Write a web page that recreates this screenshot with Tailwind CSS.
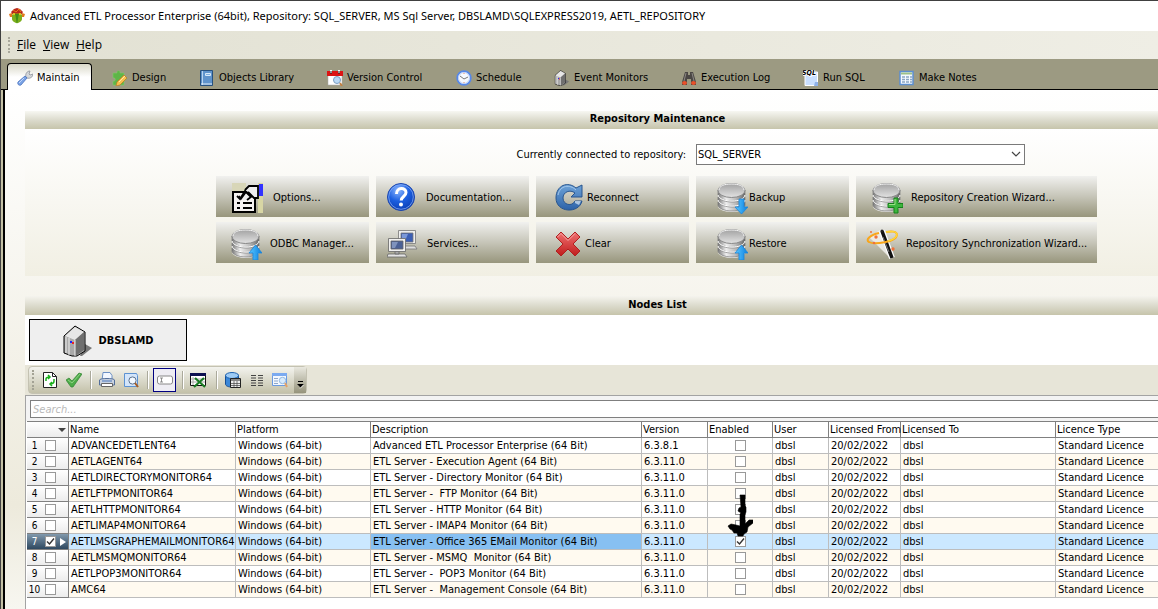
<!DOCTYPE html>
<html lang="en">
<head>
<meta charset="utf-8">
<title>Advanced ETL Processor Enterprise</title>
<script src="https://cdn.jsdelivr.net/npm/@tailwindcss/browser@4"></script>
</head>
<body class="flex min-h-screen flex-col overflow-hidden border-t border-l border-[#404040] bg-white font-['DejaVu_Sans_Condensed','DejaVu_Sans',sans-serif] text-[11px] leading-4 text-black">

<svg class="absolute size-0" xmlns="http://www.w3.org/2000/svg" aria-hidden="true">
  <defs>
    <linearGradient id="metal" x1="0" x2="1"><stop offset="0" stop-color="#777"/><stop offset=".3" stop-color="#eee"/><stop offset=".65" stop-color="#bbb"/><stop offset="1" stop-color="#666"/></linearGradient>
    <linearGradient id="lid" x1="0" x2="0" y1="0" y2="1"><stop offset="0" stop-color="#a2a2a2"/><stop offset="1" stop-color="#e2e2e2"/></linearGradient>
    <linearGradient id="azure" x1="0" x2="1"><stop offset="0" stop-color="#5cc8ff"/><stop offset="1" stop-color="#0a7fe0"/></linearGradient>
    <linearGradient id="steel" x1="0" x2="0" y1="0" y2="1"><stop offset="0" stop-color="#6ea3d8"/><stop offset="1" stop-color="#2c62a8"/></linearGradient>
    <linearGradient id="ruby" x1="0" x2="0" y1="0" y2="1"><stop offset="0" stop-color="#f07070"/><stop offset="1" stop-color="#c01c1c"/></linearGradient>
    <radialGradient id="orb" cx=".4" cy=".25" r=".8"><stop offset="0" stop-color="#8db8ff"/><stop offset=".5" stop-color="#1c5fe0"/><stop offset="1" stop-color="#0a3bb0"/></radialGradient>
  </defs>
  <symbol id="db" viewBox="0 0 32 32">
    <path d="M2 9v15c0 3 6 6 14 6s13-3 13-6V9z" fill="#f4f4f4"/>
    <path d="M2 20v3c0 3 6 6 14 6s13-3 13-6v-3c-2 3-7 5-13 5S4 23 2 20z" fill="url(#metal)" stroke="#777" stroke-width=".7"/>
    <path d="M2 15v3c0 3 6 6 14 6s13-3 13-6v-3c-2 3-7 5-13 5S4 18 2 15z" fill="url(#metal)" stroke="#777" stroke-width=".7"/>
    <path d="M2 8v5c0 3 6 6 14 6s13-3 13-6V8z" fill="url(#metal)" stroke="#777" stroke-width=".7"/>
    <path d="M2 13c1 4 7 6 14 6s12-2 13-6M2 18c1 4 7 6 14 6s12-2 13-6" fill="none" stroke="#fff"/>
    <ellipse cx="15.500" cy="8.500" rx="13.500" ry="7" fill="url(#lid)" stroke="#888"/>
    <path d="M3 8c0-4 5-6 12.500-6S28 4 28 8" fill="none" stroke="#f8f8f8"/>
  </symbol>
  <symbol id="up" viewBox="0 0 32 32"><path d="M25.500 17l6.500 8h-4v7h-5v-7h-4z" fill="url(#azure)" stroke="#1b86dc" stroke-width=".8"/></symbol>
  <symbol id="down" viewBox="0 0 32 32"><path d="M23 17h5v8h4l-6.500 7-6.500-7h4z" fill="url(#azure)" stroke="#1b86dc" stroke-width=".8"/></symbol>
  <symbol id="server" viewBox="0 0 30 32">
    <path d="M17 31l5-12 7 4-10 8z" fill="#777"/>
    <path d="M1 11L12 1l10 6v19l-8 5H9l-8-3z" fill="#a9a9a9" stroke="#000"/>
    <path d="M2 11L12 2l9 5-9 8z" fill="#e6e6e6"/>
    <path d="M12 15l9-8v18l-7 5h-2z" fill="#6f6f6f"/>
    <path d="M3 12v16M6 13v17M12 15v16" stroke="#eee" fill="none"/>
    <path d="M7 16h2v2H7z" fill="#22f"/><path d="M9 17h2v2H9z" fill="#e22"/>
  </symbol>
</svg>

<header class="flex h-[30px] items-center gap-[5px] bg-white pl-2">
  <svg class="size-4 shrink-0" viewBox="0 0 16 16"><path d="M2 4l3-3 3-1 3 1 3 3-2 3H4z" fill="#b8271a"/><path d="M4 2l3 2 3-3 2 3" fill="none" stroke="#e8781c"/><path d="M0 6l3-1v4H1zM16 6l-3-1v4h2z" fill="#e37a1d"/><path d="M3 7c2-2 8-2 10 0v4c0 2-3 4-5 4s-5-2-5-4z" fill="#7cae1c"/><path d="M6 6c1 3 1 6 2 10 1-4 1-7 2-10z" fill="#3f8d17"/><path d="M4 5h2v2H4zM10 5h2v2h-2z" fill="#d5c71e"/></svg>
  <h1 class="font-['Noto_Sans',sans-serif] text-[11px] leading-4 whitespace-nowrap">Advanced ETL Processor Enterprise (64bit), Repository: SQL_SERVER, MS Sql Server, DBSLAMD\SQLEXPRESS2019, AETL_REPOSITORY</h1>
</header>

<nav class="flex h-7 items-center bg-linear-to-r from-[#e2e1d3] to-[#efeee5] pl-[7px] font-['Open_Sans',sans-serif] text-[12px]" aria-label="Menu">
  <span class="mr-[7px] h-4 border-l-2 border-dotted border-[#a9a89c]"></span>
  <button class="w-[26px] text-left"><u>F</u>ile</button>
  <button class="w-[33px] text-left"><u>V</u>iew</button>
  <button class="text-left"><u>H</u>elp</button>
</nav>

<div class="flex h-[31px] shrink-0 items-end border-b border-black bg-[#9c9a82] pl-1.5 whitespace-nowrap" role="tablist">
  <button role="tab" aria-selected="true" class="-mb-px mr-5 flex h-[27px] w-[85px] items-center gap-1 rounded-t border-x border-t border-black bg-linear-to-b from-[#d9d8c8] via-white to-white pt-0.5 pl-[9px]">
    <svg class="size-4" viewBox="0 0 16 16"><path d="M9 7C8 4 10 1 13 1l-1 3 1 1 3-1c0 3-3 5-6 4z" fill="#d5d8dc" stroke="#8b9098" stroke-width=".8"/><path d="M8 6l2 2-6 7c-2 1-4-1-3-3z" fill="#7ba4e6" stroke="#4a72be" stroke-width=".8"/><path d="M7 8l-5 5" stroke="#c4d8fa"/></svg>Maintain</button>
  <button role="tab" class="flex h-6 w-[87px] items-center gap-1 pt-0.5"><svg class="size-4" viewBox="0 0 16 16"><path d="M1 3h4c-1-3 4-3 3 0h4v4c3-1 3 4 0 3v5H8c1-3-4-3-3 0H1v-4c3 1 3-4 0-3z" fill="#5fb548" stroke="#84c96c" stroke-width=".6"/><path d="M5 12l7-7 3 3-7 7-4 1z" fill="#f7c04e" stroke="#b87820" stroke-width=".7"/><path d="M7 12l6-6" stroke="#ffe9a6"/></svg>Design</button>
  <button role="tab" class="flex h-6 w-[128px] items-center gap-1 pt-0.5"><svg class="size-4" viewBox="0 0 16 16"><path d="M1.500.500h12v15h-12z" fill="#5f93cc" stroke="#27517f"/><path d="M3.500 1v14" stroke="#b9d4ef"/><path d="M6.500 3.500h5v2h-5z" fill="#7fb0e0" stroke="#d7e8f8"/><path d="M2 14h11" stroke="#e4eef8"/></svg>Objects Library</button>
  <button role="tab" class="flex h-6 w-[129px] items-center gap-1 pt-0.5"><svg class="size-4" viewBox="0 0 16 16"><path d="M1 4h14v11H1z" fill="#fff" stroke="#aaa" stroke-width=".5"/><path d="M0 1h16v5H0z" fill="#dc1414"/><path d="M4 0v3M12 0v3" stroke="#fff" stroke-width="2"/><path d="M4 1v3M12 1v3" stroke="#222"/><circle cx="10" cy="10" r="3.500" fill="#b9d9f6" stroke="#7c9dc0"/><path d="M13 13l2 3" stroke="#c28144" stroke-width="2"/></svg>Version Control</button>
  <button role="tab" class="flex h-6 w-[98px] items-center gap-1 pt-0.5"><svg class="size-4" viewBox="0 0 16 16"><circle cx="8" cy="8" r="6.800" fill="#f7faff" stroke="#5688e8" stroke-width="1.800"/><circle cx="8" cy="8" r="5.500" fill="none" stroke="#bcd0f5"/><path d="M4 6l4 3 4-2" fill="none" stroke="#777"/><path d="M8 3v1M8 12v1" stroke="#e98a62"/></svg>Schedule</button>
  <button role="tab" class="flex h-6 w-[127px] items-center gap-1 pt-0.5"><svg class="size-4" viewBox="0 0 30 32"><use href="#server"/></svg>Event Monitors</button>
  <button role="tab" class="flex h-6 w-[122px] items-center gap-1 pt-0.5"><svg class="size-4" viewBox="0 0 16 16"><path d="M4 2h3v3h2V2h3l3 10v3h-5V9H6v6H1v-3z" fill="#4b4744"/><path d="M5 3l-2 8M11 3l2 8" stroke="#8c8885" fill="none"/><ellipse cx="3.500" cy="13" rx="2.500" ry="2" fill="#e8502a"/><ellipse cx="12.500" cy="13" rx="2.500" ry="2" fill="#e8502a"/></svg>Execution Log</button>
  <button role="tab" class="flex h-6 w-[96px] items-center gap-1 pt-0.5"><svg class="size-4" viewBox="0 0 16 16"><path d="M2 2h12.500v13.500H2z" fill="#c9dfff" stroke="#fff"/><path d="M12 12h3v4h-4z" fill="#8fb2ea"/><text x="-1" y="5" font-size="7" font-weight="bold" font-style="italic" stroke="#fff" stroke-width="1.500" paint-order="stroke">SQL</text></svg>Run SQL</button>
  <button role="tab" class="flex h-6 items-center gap-1 pt-0.5"><svg class="size-4" viewBox="0 0 16 16"><path d="M1 1.500h13v13H1z" fill="#f5faff" stroke="#5c8fd0" stroke-width="1.500"/><path d="M2 2.500h11v2H2z" fill="#9cc088"/><path d="M3 7h3M7 7h3M11 7h2M3 9.500h3M7 9.500h3M11 9.500h2M3 12h3M7 12h3M11 12h2" stroke="#8aa6c4" stroke-width="1.300"/></svg>Make Notes</button>
</div>

<div class="flex flex-1 bg-[#c4c1a6]">
  <main class="ml-0.5 flex min-w-0 flex-1 flex-col border-l-2 border-black bg-linear-to-b from-white via-[#edeadc] via-80% to-[#f7f6f0] pt-[21px] pl-5">
    <h2 class="h-[18px] bg-linear-to-b from-[#f7f7f2] via-[#dcdbcd] to-[#c6c4ab] pl-[132px] text-center font-bold leading-[15px]">Repository Maintenance</h2>
    <section class="h-[147px] bg-linear-to-b from-white to-[#f1efe3] pt-[15px] pl-[130px]">
      <div class="mx-auto flex w-[881px] flex-col gap-[11px]">
        <div class="flex h-[21px] items-center">
          <label for="repo" class="w-[480px] pr-2.5 text-right">Currently connected to repository:</label>
          <div class="relative">
            <select id="repo" class="block h-[21px] w-[329px] appearance-none border border-[#7a7a7a] bg-white pl-px"><option>SQL_SERVER</option></select>
            <svg class="pointer-events-none absolute top-1.5 right-1 h-2 w-2.5" viewBox="0 0 10 8"><path d="M1 2l4 4 4-4" fill="none" stroke="#444" stroke-width="1.200"/></svg>
          </div>
        </div>
        <div class="grid grid-cols-[repeat(4,153px)_241px] gap-x-[7px] gap-y-[5px] whitespace-nowrap *:flex *:h-[41px] *:items-center *:bg-linear-to-b *:from-[#f1f1ef] *:via-[#c6c5b8] *:to-[#98967d] *:pt-0.5">
          <button class="gap-2.5 pl-[15px]"><svg class="size-8" viewBox="0 0 32 32"><path d="M27 1h5v30h-5z" fill="#d8d6a4"/><path d="M1 1h14v8H1z" fill="#d8d6b8"/><path d="M2 10h22v20H2z" fill="#f4f1f0" stroke="#000" stroke-width="2"/><path d="M6 21h3M12 21h9M6 26h3M12 26h9" stroke="#000" stroke-width="2"/><path d="M6 14l3 3 5-8 6 6-4 3M14 8l4-4h9v12h-4l-6-6" fill="#eee" stroke="#000" stroke-width="1.800"/><path d="M8 14l2 3 5-7" fill="none" stroke="#000" stroke-width="1.500"/><path d="M28 2h4v12h-4z" fill="#33f"/></svg>Options...</button>
          <button class="gap-2 pl-2.5"><svg class="size-8" viewBox="0 0 32 32"><circle cx="15" cy="15" r="13.500" fill="url(#orb)" stroke="#1c46ae"/><circle cx="15" cy="15" r="12.300" fill="none" stroke="#8fb4f8" stroke-width=".7"/><path d="M10.500 12c0-7 9.500-7 9.500-1.500 0 4-4.800 4-4.800 8" fill="none" stroke="#fff" stroke-width="3"/><circle cx="15" cy="22.500" r="2" fill="#fff"/></svg>Documentation...</button>
          <button class="gap-px pl-[18px]"><svg class="size-8" viewBox="0 0 32 32"><path d="M22 6l6-3v12H17l4-4c-5-4-12-1-12 5 0 7 9 9 12 3h7c-3 13-26 12-26-3C2 3 14-1 22 6z" fill="url(#steel)" stroke="#28558f"/><path d="M4 13C6 3 16 2 22 8" fill="none" stroke="#a5c8ec"/><path d="M21 19h6l-2 4-4-2z" fill="#dbe9f7" opacity=".7"/></svg>Reconnect</button>
          <button class="gap-px pl-5"><svg class="size-8" viewBox="0 0 32 32"><use href="#db"/><use href="#down"/></svg>Backup</button>
          <button class="gap-2 pl-[15px]"><svg class="size-8" viewBox="0 0 32 32"><use href="#db"/><path d="M23 16h4v5.500h5v4h-5V31h-4v-5.500h-6v-4h6z" fill="#3db53d" stroke="#15811b"/><path d="M24 17v5.500h-6" fill="none" stroke="#9de08a"/></svg>Repository Creation Wizard...</button>
          <button class="gap-2 pl-3.5"><svg class="size-8" viewBox="0 0 32 32"><use href="#db"/><use href="#up"/></svg>ODBC Manager...</button>
          <button class="gap-2 pl-[11px]"><svg class="size-8" viewBox="0 0 32 32"><g stroke="#777" stroke-width=".8"><path d="M12 18h16l2 3H11z" fill="#ddd"/><path d="M11.500 2.500h17v13h-17z" fill="#eee"/><path d="M14 5h12v9H14z" fill="#3c5fb4"/><path d="M15 6h6l-3 7h-3z" fill="#7b98d8" stroke="none"/></g><g stroke="#666" stroke-width=".8"><path d="M1 26h17l2 3H0z" fill="#e4e4e4"/><path d="M8 23h4v3H8z" fill="#aaa"/><path d="M1.500 10.500h17v13h-17z" fill="#f0f0f0"/><path d="M4 13h12v8H4z" fill="#4b6195"/><path d="M5 14h6l-3 6H5z" fill="#7f93bd" stroke="none"/></g></svg>Services...</button>
          <button class="gap-0 pl-[17px]"><svg class="size-8" viewBox="0 0 32 32"><path d="M8 4l7 7 7-7 5 5-7 7 7 7-5 5-7-7-7 7-5-5 7-7-7-7z" fill="url(#ruby)" stroke="#b02020"/><path d="M4.500 9L8 5.500l7 7 7-7" fill="none" stroke="#f7a4a4"/></svg>Clear</button>
          <button class="gap-px pl-5"><svg class="size-8" viewBox="0 0 32 32"><use href="#db"/><use href="#up"/></svg>Restore</button>
          <button class="gap-2 pl-2.5"><svg class="size-8" viewBox="0 0 32 32"><path d="M3 9L14 2l9 27z" fill="#f4f2ef" opacity=".8"/><path d="M16 3l10 27" stroke="#fff" stroke-width="6"/><path d="M16 3l10 27" stroke="#111" stroke-width="3.500"/><path d="M17 9l6 15" stroke="#777"/><path d="M13 5C4 7-1 12 3 14c5 3 27 0 28-7 0-4-6-4-11-3" fill="none" stroke="#f9a61a" stroke-width="2"/><path d="M20 4c5-1 11-1 11 3-1 3-5 5-9 6" fill="none" stroke="#ffd83a" stroke-width="1.500"/><g fill="#f0723a"><circle cx="5" cy="4" r="1"/><circle cx="10" cy="9" r="1.700"/><circle cx="8" cy="15" r="1.300"/><circle cx="27" cy="21" r="1.700"/><circle cx="16" cy="3" r="1.500" fill="#222"/></g></svg>Repository Synchronization Wizard...</button>
        </div>
      </div>
    </section>

    <h2 class="mt-5 h-[19px] bg-linear-to-b from-[#f5f4ee] via-[#dcdbcd] to-[#c6c4ab] pl-[132px] text-center font-bold leading-[17px]">Nodes List</h2>
    <div class="h-[50px] bg-white pt-1 pl-1">
      <button class="flex h-[42px] w-[158px] items-center justify-center gap-1.5 border border-black bg-[#efefef] pt-0.5 font-bold"><svg class="h-8 w-[30px]" viewBox="0 0 30 32"><use href="#server"/></svg>DBSLAMD</button>
    </div>

    <div class="h-[30px] bg-[#e7e5d8] pt-px pl-[3px]">
      <div class="flex h-7 w-[279px] items-center rounded-sm border border-[#c4c2b2] bg-linear-to-b from-[#f3f3ee] to-[#c3c1a9] pl-[3px]" role="toolbar" aria-label="Grid tools">
        <span class="mr-2 h-5 border-l-2 border-dotted border-[#a3a294]"></span>
        <button class="w-6" aria-label="Refresh"><svg class="size-4" viewBox="0 0 16 16"><path d="M1.500.500h9l4 4v11h-13z" fill="#fff" stroke="#222"/><path d="M10.500.500v4h4" fill="none" stroke="#222"/><path d="M4 9V7c0-2 2-2 4-2M6 3l2 2-2 2M12 7v2c0 2-2 3-4 3M10 14l-2-2 2-2" fill="none" stroke="#18b018" stroke-width="1.500"/></svg></button>
        <button class="w-6" aria-label="Apply"><svg class="size-4" viewBox="0 0 16 16"><path d="M0 8l3-2 3 3 7-8 3 1-9 13H5z" fill="#4dac48" stroke="#2f8130" stroke-width=".7"/><path d="M2 8l4 3 8-9" fill="none" stroke="#8fd284"/></svg></button>
        <span class="mr-[7px] ml-px h-[18px] w-0.5 border-r border-white bg-[#aaa99b]"></span>
        <button class="w-[25px]" aria-label="Print"><svg class="size-4" viewBox="0 0 16 16"><path d="M4 .500h7l2 3v5H3z" fill="#f2f7ff" stroke="#6c90c4"/><path d="M.500 8c0-2 15-2 15 0v5H.500z" fill="#c8d2e0" stroke="#536f9a"/><path d="M2.500 11.500h11v3h-11z" fill="#fff" stroke="#666"/><path d="M3 9h10" stroke="#4c78bd"/></svg></button>
        <button class="w-[23px]" aria-label="Print preview"><svg class="size-4" viewBox="0 0 16 16"><path d="M.500 1.500h12l1 2v11H.500z" fill="#d3e5fa" stroke="#5c92d2"/><circle cx="8.500" cy="8.500" r="3.600" fill="#f3f9ff" stroke="#5c738f"/><path d="M11 11l3 4" stroke="#a85e24" stroke-width="2"/></svg></button>
        <span class="mr-1 h-[18px] w-0.5 border-r border-white bg-[#aaa99b]"></span>
        <button class="mr-1.5 flex size-6 items-center justify-center border border-[#000080] bg-[#eeedf3]" aria-label="Search box" aria-pressed="true"><svg class="size-4" viewBox="0 0 16 16"><rect x=".500" y="4" width="15" height="8" rx="2" fill="#fff" stroke="#888"/><path d="M3 6h3M3 10h3M4.500 6v4" stroke="#777" stroke-width=".8"/></svg></button>
        <span class="mr-1.5 h-[18px] w-0.5 border-r border-white bg-[#aaa99b]"></span>
        <button class="w-[26px]" aria-label="Export to Excel"><svg class="size-4" viewBox="0 0 16 16"><path d="M.500 1.500h15v12H.500z" fill="#fff" stroke="#111"/><path d="M0 1h16v3H0z" fill="#0c1050"/><path d="M3 5v8M1 7h14M1 10h14" stroke="#aaa"/><path d="M5 6l10 9M14 6l-10 9" stroke="#187a22" stroke-width="2.200"/></svg></button>
        <span class="mr-[7px] h-[18px] w-0.5 border-r border-white bg-[#aaa99b]"></span>
        <button class="w-6" aria-label="Data source"><svg class="size-4" viewBox="0 0 16 16"><path d="M.500 3v9c0 2 3 3 6 3s7-1 7-3V3z" fill="#3a87d8" stroke="#164f94"/><ellipse cx="7" cy="3.500" rx="6.500" ry="3" fill="#9ccaf4" stroke="#1e62b0"/><path d="M5.500 6.500h10v9h-10z" fill="#eee" stroke="#222"/><path d="M6 7h9v2H6z" fill="#888"/><path d="M6 11.500h9M6 13.500h9M9 9v6M12 9v6" stroke="#444" stroke-width=".7"/></svg></button>
        <button class="w-6" aria-label="Columns"><svg class="size-4" viewBox="0 0 16 16"><path d="M2 3.500h5M2 6h5M2 8.500h5M2 11h5M2 13.500h5M9 3.500h5M9 6h5M9 8.500h5M9 11h5M9 13.500h5" stroke="#444" stroke-width="1.100"/></svg></button>
        <button class="w-[22px]" aria-label="Details"><svg class="size-4" viewBox="0 0 16 16"><path d="M.500 1.500h14v12H.500z" fill="#f3f8ff" stroke="#6a9ae0"/><path d="M0 1h15v3H0z" fill="#7baaf0"/><path d="M2 6.500h4M2 9h4M2 11.500h4" stroke="#8fa8cc"/><circle cx="10.500" cy="8.500" r="3.200" fill="#d8ebfc" stroke="#92b8e0"/><path d="M13 11l2 4" stroke="#e2a268" stroke-width="2"/></svg></button>
        <button class="flex h-[26px] w-3 items-end justify-center bg-linear-to-b from-[#e9e8df] to-[#96947c] pb-1" aria-label="More tools"><svg class="h-2 w-[7px]" viewBox="0 0 7 8"><path d="M1 .500h5" stroke="#000"/><path d="M0 3h7L3.500 6.500z"/><path d="M3 7.500l4-4" stroke="#fff" stroke-width=".8"/></svg></button>
      </div>
    </div>

    <section class="relative flex-1 border-t border-l border-[#a3a3a3] bg-white">
      <div class="h-[25px] bg-[#f3f3f3] pt-1 pl-1">
        <input type="search" aria-label="Search" placeholder="Search..." class="block h-[18px] w-full border border-r-0 border-[#7f7f7f] bg-white pl-0.5 text-[11px] italic placeholder:text-[#b9b9b9]">
      </div>
      <table class="ml-px w-full table-fixed border-separate border-spacing-0 border-t border-[#808080] whitespace-nowrap">
        <colgroup><col class="w-[42px]"><col class="w-[167px]"><col class="w-[135px]"><col class="w-[271px]"><col class="w-[66px]"><col class="w-[65px]"><col class="w-[56px]"><col class="w-[72px]"><col class="w-[155px]"><col></colgroup>
        <thead>
          <tr class="*:h-4 *:border-r *:border-b *:border-[#808080] *:py-0 *:pl-px *:text-left *:font-normal *:leading-[15px]">
            <th class="bg-linear-to-b from-white to-[#ececec]"><svg class="ml-auto mr-0.5 h-1 w-2" viewBox="0 0 8 4" role="img" aria-label="Row menu"><path d="M0 0h8L4 4z" fill="#444"/></svg></th>
            <th>Name</th><th>Platform</th><th>Description</th><th>Version</th><th>Enabled</th><th>User</th><th>Licensed From</th><th>Licensed To</th><th>Licence Type</th>
          </tr>
        </thead>
        <tbody id="rows"></tbody>
      </table>
      <svg class="pointer-events-none absolute top-[98px] left-[701px] h-[43px] w-[26px]" viewBox="0 0 26 43"><path d="M13 1h5v11l1 1v5l-1 2v10l4-4h4v3l-5 4-1 5-3 2-1 2h-5l-1-3H7l-2-3-2-1-2-3 3-2 5 1 4 1V20l1-1-3-2 1-3 2-1z" fill="#000" stroke="#000" stroke-width=".6"/></svg>
    </section>
  </main>
</div>

<script>
const nodes = [
  ["ADVANCEDETLENT64", "Advanced ETL Processor Enterprise (64 Bit)", "6.3.8.1"],
  ["AETLAGENT64", "ETL Server - Execution Agent (64 Bit)"],
  ["AETLDIRECTORYMONITOR64", "ETL Server - Directory Monitor (64 Bit)"],
  ["AETLFTPMONITOR64", "ETL Server -\u00a0 FTP Monitor (64 Bit)"],
  ["AETLHTTPMONITOR64", "ETL Server - HTTP Monitor (64 Bit)"],
  ["AETLIMAP4MONITOR64", "ETL Server - IMAP4 Monitor (64 Bit)"],
  ["AETLMSGRAPHEMAILMONITOR64", "ETL Server - Office 365 EMail Monitor (64 Bit)"],
  ["AETLMSMQMONITOR64", "ETL Server - MSMQ\u00a0 Monitor (64 Bit)"],
  ["AETLPOP3MONITOR64", "ETL Server -\u00a0 POP3 Monitor (64 Bit)"],
  ["AMC64", "ETL Server -\u00a0 Management Console (64 Bit)"],
];
const check = (label, on) => `<span class="relative block size-[11px]"><input type="checkbox" aria-label="${label}" ${on ? "checked" : ""} class="block size-[11px] appearance-none border border-[#999] bg-white">${on ? '<svg class="pointer-events-none absolute inset-0 size-[11px]" viewBox="0 0 11 11"><path d="M2 5.500L4.500 8 9 2.500" fill="none" stroke="#333" stroke-width="1.400"/></svg>' : ""}</span>`;
document.getElementById("rows").innerHTML = nodes.map(([name, desc, ver = "6.3.11.0"], i) => {
  const on = i === 6;
  const bg = on ? "bg-[#cbe8ff]" : i % 2 ? "bg-[#fffaf0]" : "bg-white";
  const head = on ? "bg-linear-to-b from-[#8199ad] to-[#2f4960] text-white" : "bg-linear-to-b from-white to-[#ececec]";
  return `<tr class="${bg} *:h-4 *:border-r *:border-b *:border-[#bdbdbd] *:p-0 *:pl-0.5 *:leading-[15px]">
    <th class="${head} border-[#808080]! pl-0! font-normal"><span class="flex items-center text-[10px]"><span class="mr-1 ml-px w-[13px] text-center">${i + 1}</span>${check("Select " + name, on)}${on ? '<svg class="ml-1 h-2 w-1.5" viewBox="0 0 6 8"><path d="M0 0l6 4-6 4z" fill="#fff"/></svg>' : ""}</span></th>
    <td>${name}</td><td>Windows (64-bit)</td><td class="${on ? "bg-[#87c0f2]" : ""}">${desc}</td><td>${ver}</td>
    <td class="pl-0!"><span class="flex justify-center">${check("Enabled " + name, on)}</span></td><td>dbsl</td><td>20/02/2022</td><td>dbsl</td><td>Standard Licence</td></tr>`;
}).join("");
</script>
</body>
</html>
